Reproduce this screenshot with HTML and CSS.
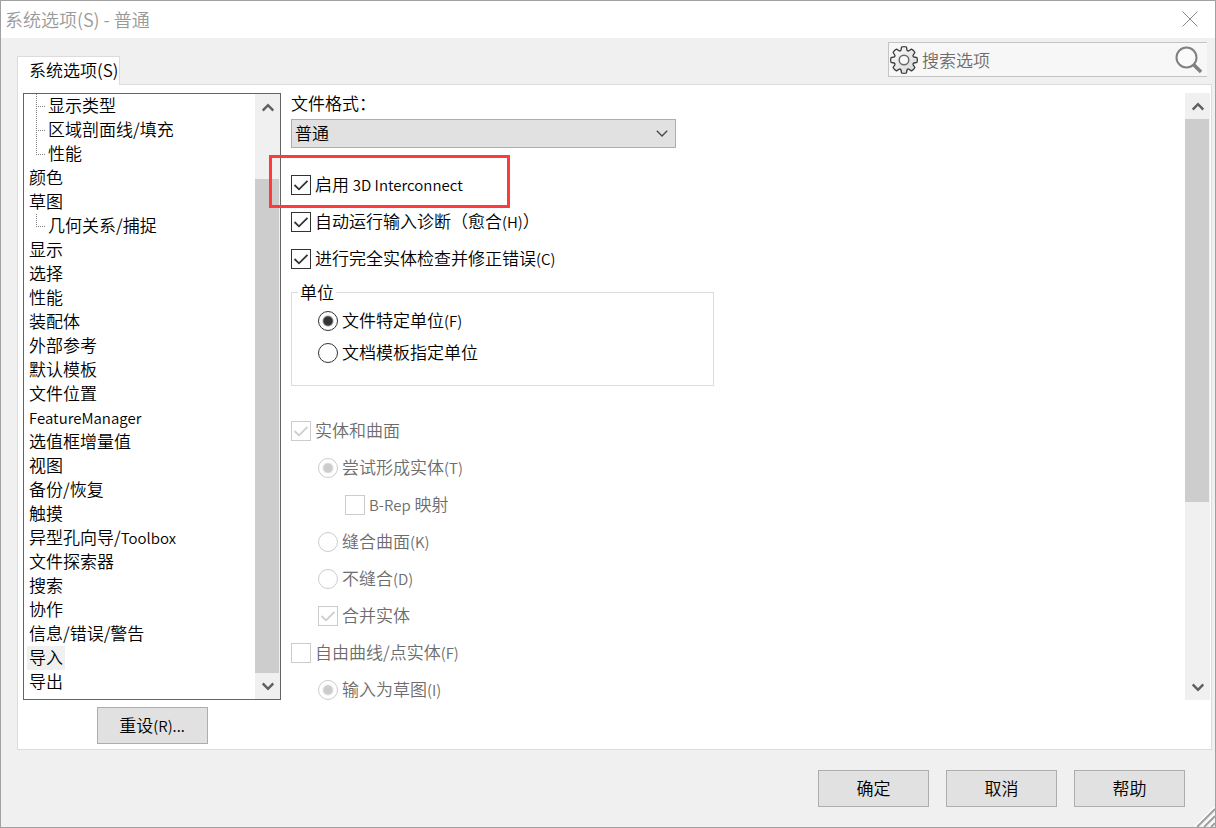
FILE: index.html
```
<!DOCTYPE html>
<html lang="zh-CN">

<head>
    <meta charset="UTF-8">
    <meta name="viewport" content="width=device-width, initial-scale=1.0">
    <title>系统选项(S) - 普通</title>
    <link rel="stylesheet" href="styles.css">
</head>

<body>
    <div class="window">
        <header class="title-bar">
            <h1 class="title">系统选项(S) - 普通</h1>
            <button class="close-button" aria-label="关闭">
                <svg width="16" height="16" viewBox="0 0 16 16" fill="none" stroke="#8a8a8a">
                    <path d="M.5 .5L15.5 15.5M15.5 .5L.5 15.5" />
                </svg>
            </button>
        </header>

        <div class="top-row">
            <button class="tab">系统选项(S)</button>
            <div class="search">
                <svg width="30" height="30" viewBox="-15 -15 30 30" stroke="#3c3c3c" stroke-linejoin="round">
                    <defs>
                        <linearGradient id="gear" x1="0" y1="0" x2="1" y2="1">
                            <stop offset="0" stop-color="#fff" />
                            <stop offset="1" stop-color="#d4d4d4" />
                        </linearGradient>
                    </defs>
                    <path fill="url(#gear)" stroke-width="1.3"
                        d="M-2.4-13Q0-13.8 2.4-13L3-10A1.3 1.3 0 0 0 4.95-9.19L7.49-10.89Q9.8-9.8 10.89-7.49L9.19-4.95A1.3 1.3 0 0 0 10-3L13-2.4Q13.8 0 13 2.4L10 3A1.3 1.3 0 0 0 9.19 4.95L10.89 7.49Q9.8 9.8 7.49 10.89L4.95 9.19A1.3 1.3 0 0 0 3 10L2.4 13Q0 13.8-2.4 13L-3 10A1.3 1.3 0 0 0-4.95 9.19L-7.49 10.89Q-9.8 9.8-10.89 7.49L-9.19 4.95A1.3 1.3 0 0 0-10 3L-13 2.4Q-13.8 0-13-2.4L-10-3A1.3 1.3 0 0 0-9.19-4.95L-10.89-7.49Q-9.8-9.8-7.49-10.89L-4.95-9.19A1.3 1.3 0 0 0-3-10Z" />
                    <circle r="4.8" fill="#f7f7f7" stroke="#6a6a6a" stroke-width="1.5" />
                </svg>
                <input class="search-input" type="text" placeholder="搜索选项" aria-label="搜索选项">
                <button class="search-button" aria-label="搜索">
                    <svg width="28" height="28" viewBox="0 0 28 28" fill="none" stroke="#808080">
                        <circle cx="11.5" cy="11.5" r="10" fill="#fafafa" stroke-width="2" />
                        <path d="M18.5 18.5L26 26" stroke-width="3.6" />
                    </svg>
                </button>
            </div>
        </div>

        <main class="panel">
            <div class="sidebar">
                <div class="tree-box">
                    <ul class="tree">
                        <li class="child"><button>显示类型</button></li>
                        <li class="child"><button>区域剖面线/填充</button></li>
                        <li class="child last"><button>性能</button></li>
                        <li><button>颜色</button></li>
                        <li><button>草图</button></li>
                        <li class="child last"><button>几何关系/捕捉</button></li>
                        <li><button>显示</button></li>
                        <li><button>选择</button></li>
                        <li><button>性能</button></li>
                        <li><button>装配体</button></li>
                        <li><button>外部参考</button></li>
                        <li><button>默认模板</button></li>
                        <li><button>文件位置</button></li>
                        <li><button><span class="latin">FeatureManager</span></button></li>
                        <li><button>选值框增量值</button></li>
                        <li><button>视图</button></li>
                        <li><button>备份/恢复</button></li>
                        <li><button>触摸</button></li>
                        <li><button>异型孔向导/<span class="latin">Toolbox</span></button></li>
                        <li><button>文件探索器</button></li>
                        <li><button>搜索</button></li>
                        <li><button>协作</button></li>
                        <li><button>信息/错误/警告</button></li>
                        <li><button class="selected">导入</button></li>
                        <li><button>导出</button></li>
                    </ul>
                    <div class="scrollbar tree-scroll">
                        <button aria-label="向上滚动">
                            <svg width="12" height="9" viewBox="0 0 12 9" fill="none" stroke="#606060" stroke-width="2.5">
                                <path d="M.7 7.5L6 2.2L11.3 7.5" />
                            </svg>
                        </button>
                        <div class="track">
                            <div class="thumb"></div>
                        </div>
                        <button aria-label="向下滚动">
                            <svg width="12" height="9" viewBox="0 0 12 9" fill="none" stroke="#606060" stroke-width="2.5">
                                <path d="M.7 1.5L6 6.8L11.3 1.5" />
                            </svg>
                        </button>
                    </div>
                </div>
                <button class="push-button">重设<span class="latin">(R)...</span></button>
            </div>

            <form class="options">
                <label class="format-label" for="format">文件格式：</label>
                <select class="format" id="format">
                    <option>普通</option>
                </select>

                <div class="checks">
                    <label class="option marked"><input type="checkbox" checked><span>启用 <span class="latin">3D Interconnect</span></span></label>
                    <label class="option"><input type="checkbox" checked><span>自动运行输入诊断（愈合<span class="latin">(H)</span>）</span></label>
                    <label class="option"><input type="checkbox" checked><span>进行完全实体检查并修正错误<span class="latin">(C)</span></span></label>
                </div>

                <fieldset class="units">
                    <legend>单位</legend>
                    <label class="option"><input type="radio" name="unit" checked><span>文件特定单位<span class="latin">(F)</span></span></label>
                    <label class="option"><input type="radio" name="unit"><span>文档模板指定单位</span></label>
                </fieldset>

                <div class="checks entities">
                    <label class="option"><input type="checkbox" checked disabled><span>实体和曲面</span></label>
                    <label class="option indent"><input type="radio" name="solid" checked disabled><span>尝试形成实体<span class="latin">(T)</span></span></label>
                    <label class="option indent-more"><input type="checkbox" disabled><span><span class="latin">B-Rep</span> 映射</span></label>
                    <label class="option indent"><input type="radio" name="solid" disabled><span>缝合曲面<span class="latin">(K)</span></span></label>
                    <label class="option indent"><input type="radio" name="solid" disabled><span>不缝合<span class="latin">(D)</span></span></label>
                    <label class="option indent"><input type="checkbox" checked disabled><span>合并实体</span></label>
                    <label class="option"><input type="checkbox" disabled><span>自由曲线/点实体<span class="latin">(F)</span></span></label>
                    <label class="option indent"><input type="radio" name="curve" checked disabled><span>输入为草图<span class="latin">(I)</span></span></label>
                </div>
            </form>

            <div class="scrollbar page-scroll">
                <button aria-label="向上滚动">
                    <svg width="12" height="9" viewBox="0 0 12 9" fill="none" stroke="#606060" stroke-width="2.5">
                        <path d="M.7 7.5L6 2.2L11.3 7.5" />
                    </svg>
                </button>
                <div class="track">
                    <div class="thumb"></div>
                </div>
                <button aria-label="向下滚动">
                    <svg width="12" height="9" viewBox="0 0 12 9" fill="none" stroke="#606060" stroke-width="2.5">
                        <path d="M.7 1.5L6 6.8L11.3 1.5" />
                    </svg>
                </button>
            </div>
        </main>

        <footer class="footer">
            <button class="push-button">确定</button>
            <button class="push-button">取消</button>
            <button class="push-button">帮助</button>
        </footer>

        <svg class="grip" width="20" height="20" viewBox="0 0 20 20" fill="none">
            <path d="M0 20L20 0M7 20L20 7M14 20L20 14" stroke="#fff" stroke-width="2" />
            <path d="M2 20L20 2M9 20L20 9M16 20L20 16" stroke="#a0a0a0" stroke-width="2" />
        </svg>
    </div>
</body>

</html>
```

FILE: styles.css
```
*,
*::before,
*::after {
    box-sizing: border-box;
}

body {
    margin: 0;
    font-family: "Noto Sans CJK SC", sans-serif;
    font-size: 17px;
    font-weight: 350;
    line-height: 24px;
    color: #000;
}

button,
input,
select {
    font: inherit;
    color: inherit;
}

button {
    padding: 0;
    border: none;
    background: none;
}

svg {
    display: block;
    flex: none;
}

.latin {
    font-size: 15px;
}

.window {
    position: relative;
    display: flex;
    flex-direction: column;
    min-height: 100vh;
    border: 1px solid #a0a0a0;
    background-color: #f0f0f0;
}

/* title bar */
.title-bar {
    display: flex;
    justify-content: space-between;
    align-items: center;
    height: 37px;
    padding: 0 17px 2px 4px;
    background-color: #fff;
}

.title {
    margin: 0;
    font-size: 18px;
    font-weight: inherit;
    color: #999;
}

/* tab and search */
.top-row {
    display: flex;
    justify-content: space-between;
    align-items: flex-end;
    height: 46px;
    padding: 0 8px 0 16px;
}

.tab {
    position: relative;
    z-index: 1;
    height: 29px;
    margin-bottom: -1px;
    padding: 0 1px 2px 11px;
    border: 1px solid #dcdcdc;
    border-bottom: none;
    background-color: #fff;
}

.search {
    display: flex;
    align-items: center;
    align-self: flex-start;
    width: 319px;
    height: 35px;
    margin-top: 4px;
    padding: 0 4px 0 0;
    border: 1px solid #c4c4c4;
    border-right: none;
    background-color: #f7f7f7;
}

.search-input {
    flex: 1;
    min-width: 0;
    padding: 0 3px;
    border: none;
    outline: none;
    background: none;
}

.search-input::placeholder {
    color: #6d6d6d;
}

/* main panel */
.panel {
    flex: 1;
    display: flex;
    margin: 0 3px 0 16px;
    padding: 8px 1px 5px 5px;
    border: 1px solid #dcdcdc;
    background-color: #fff;
}

.sidebar {
    display: flex;
    flex-direction: column;
    align-items: center;
    width: 258px;
}

.tree-box {
    flex: 1;
    display: flex;
    width: 100%;
    margin-bottom: 7px;
    border: 1px solid #646464;
}

.tree {
    flex: 1;
    margin: 0;
    padding: 0 0 0 3px;
    list-style: none;
}

.tree li {
    position: relative;
    height: 24px;
}

.tree li button {
    display: block;
    height: 24px;
    padding: 0 2px 2px;
    line-height: 22px;
    white-space: nowrap;
}

.tree .child {
    padding-left: 19px;
}

.tree .child::before {
    content: "";
    position: absolute;
    left: 9px;
    top: 0;
    width: 1px;
    height: 24px;
    background: repeating-linear-gradient(#808080 0 1px, transparent 1px 2px);
}

.tree .last::before {
    height: 12px;
}

.tree .child::after {
    content: "";
    position: absolute;
    left: 9px;
    top: 12px;
    width: 9px;
    height: 1px;
    background: repeating-linear-gradient(90deg, #808080 0 1px, transparent 1px 2px);
}

.tree .selected {
    background-color: #f0f0f0;
}

/* scrollbars */
.scrollbar {
    display: flex;
    flex-direction: column;
    width: 25px;
    background-color: #f0f0f0;
}

.scrollbar button {
    display: flex;
    justify-content: center;
    align-items: center;
    height: 26px;
}

.track {
    flex: 1;
    display: flex;
    flex-direction: column;
}

.thumb {
    width: 24px;
    background-color: #cdcdcd;
}

.tree-scroll .thumb {
    flex: 1;
    margin-top: 59px;
}

.page-scroll {
    margin-bottom: 44px;
}

.page-scroll .thumb {
    height: 69%;
}

/* option form */
.options {
    flex: 1;
    display: flex;
    flex-direction: column;
    align-items: flex-start;
    padding-left: 10px;
}

.format-label {
    line-height: 20px;
    margin-bottom: 6px;
}

.format {
    width: 385px;
    height: 29px;
    padding: 0 3px 1px;
    border: 1px solid #adadad;
    border-radius: 0;
    appearance: none;
    background: #e1e1e1 url("data:image/svg+xml,%3Csvg xmlns='http://www.w3.org/2000/svg' width='12' height='7' fill='none' stroke='%23444' stroke-width='1.3'%3E%3Cpath d='M.8.8L6 6L11.2.8'/%3E%3C/svg%3E") no-repeat right 7px center;
}

.checks {
    display: flex;
    flex-direction: column;
    align-items: flex-start;
    gap: 17px;
    margin-top: 27px;
}

.option {
    position: relative;
    display: flex;
    align-items: center;
    gap: 4px;
    height: 20px;
    white-space: nowrap;
}

.option > span {
    padding-bottom: 2px;
}

.option input {
    width: 20px;
    height: 20px;
    margin: 0;
    border: 1px solid #333;
    appearance: none;
    background: #fff no-repeat center;
}

.option input[type="checkbox"]:checked {
    background-image: url("data:image/svg+xml,%3Csvg xmlns='http://www.w3.org/2000/svg' width='16' height='12' fill='none' stroke='%23333' stroke-width='1.8'%3E%3Cpath d='M1.5 6L6 10.3L14.5 1.8'/%3E%3C/svg%3E");
}

.option input[type="checkbox"]:checked:disabled {
    background-image: url("data:image/svg+xml,%3Csvg xmlns='http://www.w3.org/2000/svg' width='16' height='12' fill='none' stroke='%23ccc' stroke-width='1.8'%3E%3Cpath d='M1.5 6L6 10.3L14.5 1.8'/%3E%3C/svg%3E");
}

.option input[type="radio"] {
    border-radius: 50%;
}

.option input[type="radio"]:checked {
    background-image: radial-gradient(circle, #333 4px, transparent 6px);
}

.option input[type="radio"]:checked:disabled {
    background-image: radial-gradient(circle, #ccc 4px, transparent 6px);
}

.option input:disabled {
    border-color: #ccc;
}

.option input:disabled + span {
    color: #6d6d6d;
}

/* red frame round the first option */
.marked::after {
    content: "";
    position: absolute;
    left: -22px;
    top: -20px;
    width: 241px;
    height: 53px;
    border: 3px solid #fc3c3a;
    pointer-events: none;
}

.indent {
    margin-left: 27px;
}

.indent-more {
    margin-left: 54px;
}

.units {
    display: flex;
    flex-direction: column;
    gap: 12px;
    width: 423px;
    margin: 11px 0 0;
    padding: 7px 26px 22px;
    border: 1px solid #dcdcdc;
}

.units legend {
    margin-left: -20px;
    padding: 0 2px;
}

.entities {
    margin-top: 35px;
}

/* buttons */
.push-button {
    width: 111px;
    height: 37px;
    padding-bottom: 1px;
    border: 1px solid #adadad;
    background-color: #e1e1e1;
}

.footer {
    display: flex;
    justify-content: flex-end;
    gap: 17px;
    padding: 20px 30px;
}

.grip {
    position: absolute;
    right: 0;
    bottom: 0;
}
```
